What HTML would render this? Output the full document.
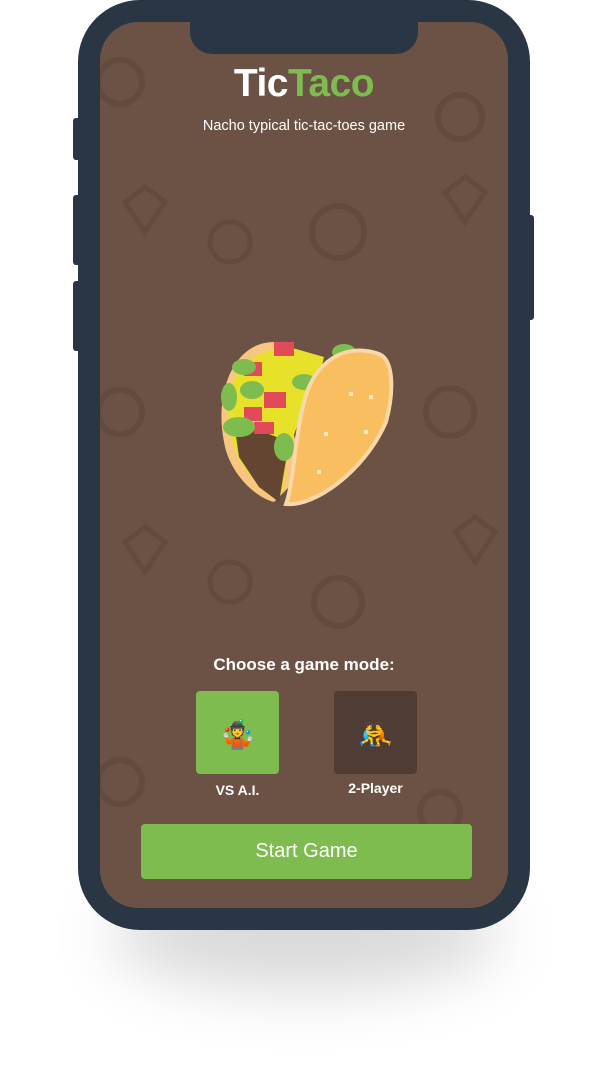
<!DOCTYPE html>
<html><head><meta charset="utf-8"><style>
body{margin:0;width:608px;height:1078px;background:#fff;position:relative;overflow:hidden;font-family:"Liberation Sans",sans-serif}
.shadow{position:absolute;left:110px;top:880px;width:390px;height:110px;border-radius:50%;background:rgba(0,0,0,.15);filter:blur(30px)}
.phone{position:absolute;left:78px;top:0;width:452px;height:930px;background:#2b3644;border-radius:62px}
.btn{position:absolute;background:#2b3644;border-radius:3px}
.screen{position:absolute;left:100px;top:22px;width:408px;height:886px;background:#6b5244;border-radius:38px;overflow:hidden}
.notch{position:absolute;left:90px;top:0;width:228px;height:32px;background:#2b3644;border-radius:0 0 22px 22px}
.t{position:absolute;width:100%;text-align:center;color:#fff}
.mode{position:absolute;width:83px;height:83px;border-radius:4px}
</style></head><body>
<div class="shadow"></div>
<div class="btn" style="left:73px;top:118px;width:8px;height:42px"></div>
<div class="btn" style="left:73px;top:195px;width:8px;height:70px"></div>
<div class="btn" style="left:73px;top:281px;width:8px;height:70px"></div>
<div class="btn" style="left:526px;top:215px;width:8px;height:105px"></div>
<div class="phone"></div>
<div class="screen">
<svg width="408" height="886" style="position:absolute;left:0;top:0" fill="none" stroke="#624a3d" stroke-width="6">
<circle cx="20" cy="60" r="22"/><circle cx="360" cy="95" r="22"/><circle cx="238" cy="210" r="26"/><circle cx="20" cy="390" r="22"/><circle cx="350" cy="390" r="24"/><circle cx="20" cy="760" r="22"/><circle cx="238" cy="580" r="24"/><circle cx="340" cy="790" r="20"/>
<circle cx="130" cy="220" r="20" stroke-width="5"/><circle cx="130" cy="560" r="20" stroke-width="5"/>
<path d="M25 180 l20-15 l20 15 l-20 30z M345 170 l20-15 l20 15 l-20 30z M25 520 l20-15 l20 15 l-20 30z M355 510 l20-15 l20 15 l-20 30z" stroke-width="5"/>
</svg>
<div class="notch"></div>
<div class="t" style="top:40px;font-size:39px;font-weight:bold;letter-spacing:-0.5px">Tic<span style="color:#7fbc4f">Taco</span></div>
<div class="t" style="top:96px;font-size:14.5px">Nacho typical tic-tac-toes game</div>
<svg style="position:absolute;left:114px;top:300px" width="180" height="185" viewBox="0 0 180 185">
<path d="M60 20 C20 20 0 70 10 120 C15 150 40 175 60 180 L90 150 L60 40Z" fill="#f6c77e"/>
<path d="M15 100 C10 60 30 28 75 25 L110 35 C100 80 70 110 70 170 C50 170 20 150 15 100Z" fill="#e8e12a"/>
<path d="M20 100 L25 135 L45 165 L65 180 L75 120 L50 110Z" fill="#634532"/>
<g fill="#e24a5a"><rect x="60" y="20" width="20" height="14"/><rect x="30" y="40" width="18" height="14"/><rect x="50" y="70" width="22" height="16"/><rect x="30" y="85" width="18" height="14"/><rect x="40" y="100" width="20" height="12"/></g>
<g fill="#7fbc4f"><ellipse cx="30" cy="45" rx="12" ry="8"/><ellipse cx="15" cy="75" rx="8" ry="14"/><ellipse cx="38" cy="68" rx="12" ry="9"/><ellipse cx="25" cy="105" rx="16" ry="10"/><ellipse cx="70" cy="125" rx="10" ry="14"/><ellipse cx="90" cy="60" rx="12" ry="8"/><ellipse cx="130" cy="30" rx="12" ry="8"/></g>
<path d="M165 32 C130 20 100 40 90 80 C80 120 80 160 72 182 C100 185 150 150 172 100 C180 70 180 38 165 32Z" fill="#f9be5f" stroke="#f8d8a8" stroke-width="4"/>
<g fill="#fde7c5"><rect x="135" y="70" width="4" height="4"/><rect x="155" y="73" width="4" height="4"/><rect x="110" y="110" width="4" height="4"/><rect x="150" y="108" width="4" height="4"/><rect x="103" y="148" width="4" height="4"/></g>
</svg>
<div class="t" style="top:633px;font-size:17px;font-weight:bold">Choose a game mode:</div>
<div class="mode" style="left:96px;top:669px;background:#7fbc4f"></div>
<div class="mode" style="left:234px;top:669px;background:#4f3c35"></div>
<div style="position:absolute;left:96px;top:694px;width:83px;text-align:center;font-size:28px;line-height:34px;font-family:'Noto Sans CJK SC',sans-serif">🤹</div>
<div style="position:absolute;left:234px;top:694px;width:83px;text-align:center;font-size:28px;line-height:34px;font-family:'Noto Sans CJK SC',sans-serif">🤼</div>
<div style="position:absolute;left:96px;top:760px;width:83px;text-align:center;color:#fff;font-weight:bold;font-size:14px">VS A.I.</div>
<div style="position:absolute;left:234px;top:758px;width:83px;text-align:center;color:#fff;font-weight:bold;font-size:14px">2-Player</div>
<div style="position:absolute;left:41px;top:802px;width:331px;height:55px;background:#7fbc4f;border-radius:4px;color:#fff;font-size:20px;text-align:center;line-height:55px">Start Game</div>
</div>
</body></html>
